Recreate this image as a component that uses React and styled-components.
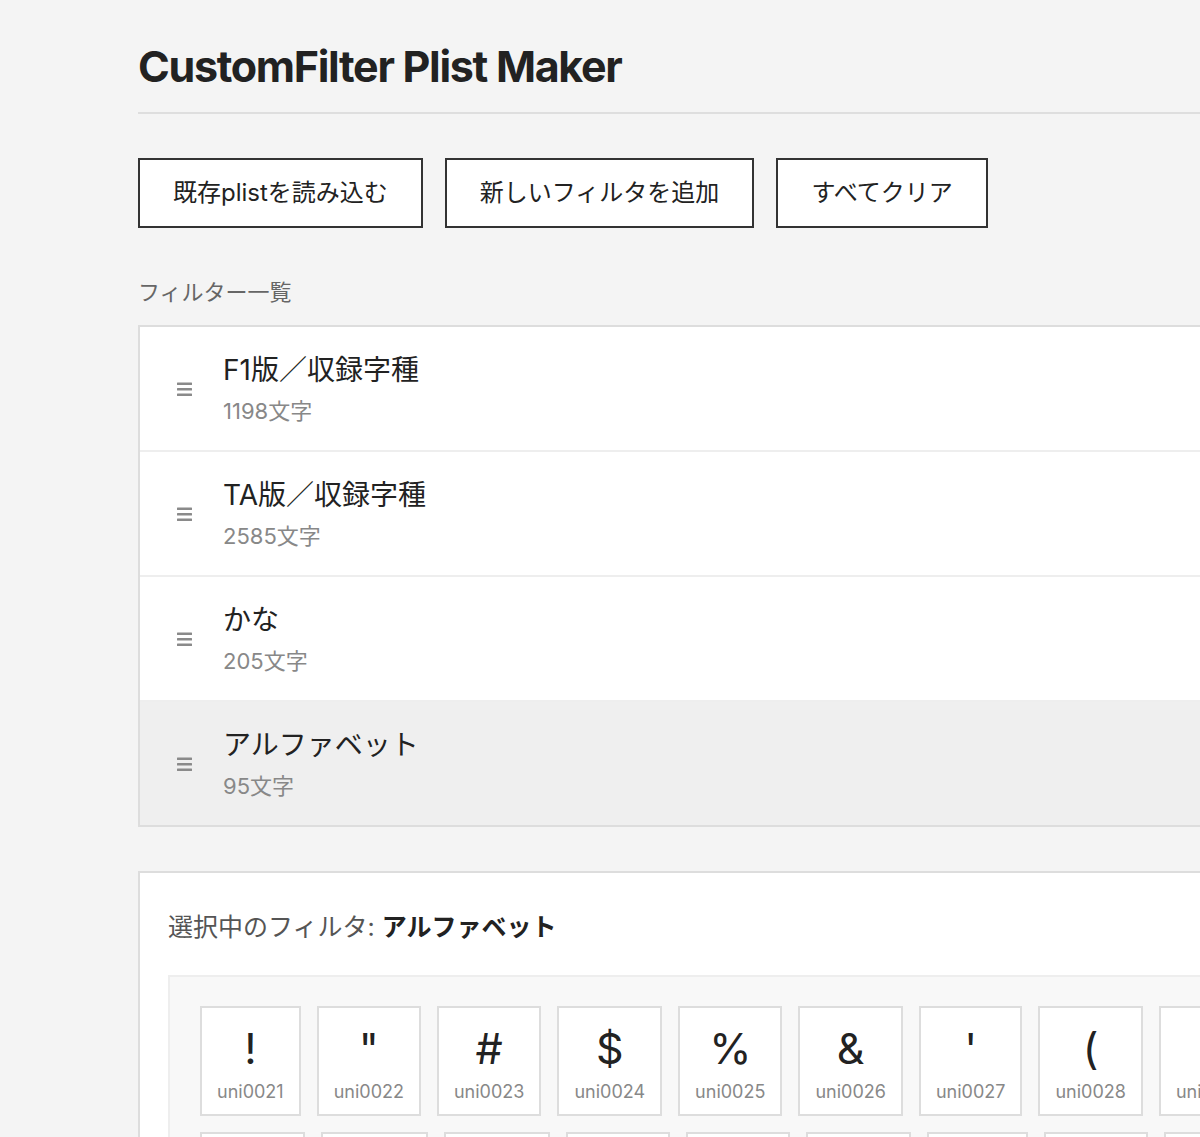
import styled, { createGlobalStyle } from "styled-components";

const GlobalStyle = createGlobalStyle`
  html, body {
    margin: 0;
    padding: 0;
    overflow: hidden;
    background: #f4f4f4;
  }
  body {
    font-family: "Inter", "Noto Sans CJK JP", sans-serif;
    color: #222;
  }
`;

const filters = [
  { name: "F1版／収録字種", count: 1198 },
  { name: "TA版／収録字種", count: 2585 },
  { name: "かな", count: 205 },
  { name: "アルファベット", count: 95 },
];

const glyphs = [];
for (let c = 0x21; c <= 0x7e; c++) glyphs.push(c);

const hex = (c) => "uni" + c.toString(16).toUpperCase().padStart(4, "0");

const Page = styled.div`
  width: 1324px;
  padding: 39px 0 60px 138px;
`;

const Header = styled.header`
  padding-bottom: 18px;
  border-bottom: 2px solid #dedede;
`;

const Title = styled.h1`
  margin: 0;
  font-size: 43px;
  line-height: 55px;
  font-weight: 700;
  letter-spacing: -1.3px;
  color: #222;
`;

const Toolbar = styled.div`
  display: flex;
  gap: 22px;
  margin-top: 44px;
`;

const Button = styled.button`
  font-family: inherit;
  font-size: 24px;
  line-height: 36px;
  padding: 15px 33px;
  background: #fff;
  color: #222;
  border: 2px solid #333;
  border-radius: 0;
  cursor: pointer;
`;

const SectionLabel = styled.h2`
  margin: 47px 0 16px;
  font-size: 22px;
  line-height: 34px;
  font-weight: 400;
  color: #666;
`;

const List = styled.ul`
  list-style: none;
  margin: 0;
  padding: 0;
  background: #fff;
  border: 2px solid #ddd;
`;

const Row = styled.li`
  display: flex;
  align-items: center;
  gap: 31px;
  padding: 23px 37px;
  background: ${(p) => (p.$active ? "#efefef" : "#fff")};
  border-bottom: ${(p) => (p.$last ? "none" : "2px solid #eee")};
`;

const Handle = styled.svg`
  flex: none;
  width: 15px;
  height: 14px;
  fill: #8a8a8a;
`;

const RowText = styled.div`
  display: flex;
  flex-direction: column;
`;

const RowName = styled.div`
  font-size: 28px;
  line-height: 40px;
  color: #222;
`;

const RowCount = styled.div`
  margin-top: 5px;
  font-size: 22px;
  line-height: 32px;
  color: #888;
`;

const Panel = styled.section`
  margin-top: 44px;
  padding: 35px 28px 34px;
  background: #fff;
  border: 2px solid #ddd;
`;

const Selected = styled.div`
  font-size: 25px;
  line-height: 38px;
  color: #555;

  strong {
    color: #222;
    font-weight: 700;
  }
`;

const GlyphGrid = styled.div`
  display: flex;
  flex-wrap: wrap;
  gap: 16px;
  margin-top: 29px;
  padding: 29px 30px;
  background: #f8f8f8;
  border: 2px solid #eee;
`;

const Card = styled.div`
  display: flex;
  flex-direction: column;
  align-items: center;
  padding: 15px 15px 9px;
  background: #fff;
  border: 2px solid #ddd;
`;

const Glyph = styled.div`
  font-size: 43px;
  line-height: 50px;
  color: #222;
`;

const GlyphName = styled.div`
  margin-top: 5px;
  font-size: 18px;
  line-height: 27px;
  color: #888;
`;

const DragHandle = () => (
  <Handle viewBox="0 0 15 14">
    <rect x="0" y="0.5" width="15" height="2.5" rx="0.5" />
    <rect x="0" y="6" width="15" height="2.5" rx="0.5" />
    <rect x="0" y="11.5" width="15" height="2.5" rx="0.5" />
  </Handle>
);

const App = () => {
  return (
    <>
      <GlobalStyle />
      <Page>
        <Header>
          <Title>CustomFilter Plist Maker</Title>
        </Header>
        <Toolbar>
          <Button>既存plistを読み込む</Button>
          <Button>新しいフィルタを追加</Button>
          <Button>すべてクリア</Button>
        </Toolbar>

        <SectionLabel>フィルター一覧</SectionLabel>
        <List>
          {filters.map((f, i) => (
            <Row key={f.name} $active={i === 3} $last={i === filters.length - 1}>
              <DragHandle />
              <RowText>
                <RowName>{f.name}</RowName>
                <RowCount>{f.count}文字</RowCount>
              </RowText>
            </Row>
          ))}
        </List>

        <Panel>
          <Selected>
            選択中のフィルタ: <strong>アルファベット</strong>
          </Selected>
          <GlyphGrid>
            {glyphs.map((c) => (
              <Card key={c}>
                <Glyph>{String.fromCharCode(c)}</Glyph>
                <GlyphName>{hex(c)}</GlyphName>
              </Card>
            ))}
          </GlyphGrid>
        </Panel>
      </Page>
    </>
  );
};

export default App;
